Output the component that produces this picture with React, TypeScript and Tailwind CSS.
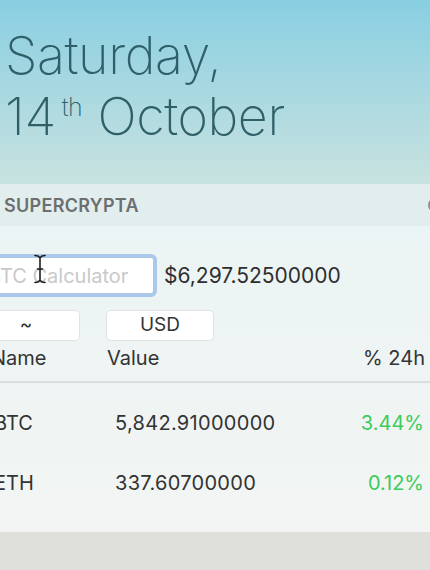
import React from "react";

const rows = [
  { name: "BTC", value: "5,842.91000000", change: "3.44%" },
  { name: "ETH", value: "337.60700000", change: "0.12%" },
];

const Cursor = () => (
  <svg
    className="absolute left-[34px] top-[254px]"
    width="12"
    height="30"
    viewBox="0 0 12 30"
    fill="none"
  >
    <path
      d="M1 1.5c2 0 4 .5 5 2.5 1-2 3-2.5 5-2.5M6 4v22M1 28.5c2 0 4-.5 5-2.5 1 2 3 2.5 5 2.5M3.5 15h5"
      stroke="#1f1f1f"
      strokeWidth="1.6"
      strokeLinecap="round"
    />
  </svg>
);

export default function App() {
  return (
    <div className="relative w-[430px] h-[570px] overflow-hidden bg-[#dfdfdc] font-['Inter','Liberation_Sans',sans-serif]">
      {/* Date */}
      <div className="h-[184px] bg-gradient-to-b from-[#88cfe2] to-[#c8e2df] pl-[5px] pt-[25px] text-[#2f5f68] font-extralight">
        <div className="text-[52px] leading-[61px] tracking-[-0.4px]">Saturday,</div>
        <div className="text-[52px] leading-[61px] tracking-[-0.4px] flex items-start">
          <span>14</span>
          <span className="text-[25px] leading-[25px] mt-[9px] ml-[6px] mr-[15px]">th</span>
          <span>October</span>
        </div>
      </div>

      {/* Widget */}
      <div className="bg-[#eef4f3]">
        <div className="h-[42px] flex items-center justify-between bg-[#e2eded] pl-[4px]">
          <span className="text-[18px] font-semibold tracking-[0.3px] text-[#6b6f6f]">
            SUPERCRYPTA
          </span>
          <span className="w-[14px] h-[14px] rounded-full border-[2px] border-[#8a8f8f] mr-[-12px]" />
        </div>

        <div className="h-[306px] bg-gradient-to-b from-[#ebf4f4] to-[#f2f5f3]">
          <div className="ml-[-28px] pt-[28px] flex items-center gap-[7px]">
            <input
              readOnly
              placeholder="BTC Calculator"
              className="w-[185px] h-[43px] rounded-[6px] border-[4px] border-[#a9c8ea] bg-white pl-[12px] text-[20px] outline-none placeholder:text-[#c9c9c9]"
            />
            <span className="text-[21px] text-[#2e2e2e]">$6,297.52500000</span>
          </div>

          <div className="ml-[-28px] mt-[13px] flex gap-[26px]">
            <div className="w-[108px] h-[31px] rounded-[5px] bg-white border border-[#e1e3e3] flex items-center justify-center text-[19px] text-[#333]">
              ~
            </div>
            <div className="w-[108px] h-[31px] rounded-[5px] bg-white border border-[#e1e3e3] flex items-center justify-center text-[19px] text-[#333]">
              USD
            </div>
          </div>

          <div className="ml-[-9px] mt-[1px] h-[41px] pb-[8px] flex items-center border-b-[2px] border-[#dcdede] text-[20px] text-[#333]">
            <span className="w-[116px]">Name</span>
            <span className="flex-1">Value</span>
            <span className="pr-[5px]">% 24h</span>
          </div>

          <div className="ml-[-6px] pt-[10px] text-[20px] text-[#333]">
            {rows.map((r, i) => (
              <div
                key={r.name}
                className={`h-[60px] flex items-center ${i === 0 ? "border-b border-[#eef2f0]" : ""}`}
              >
                <span className="w-[121px]">{r.name}</span>
                <span className="flex-1 tracking-[0.3px]">{r.value}</span>
                <span className="pr-[6px] text-[#3dcb5b]">{r.change}</span>
              </div>
            ))}
          </div>
        </div>
      </div>

      <Cursor />
    </div>
  );
}
